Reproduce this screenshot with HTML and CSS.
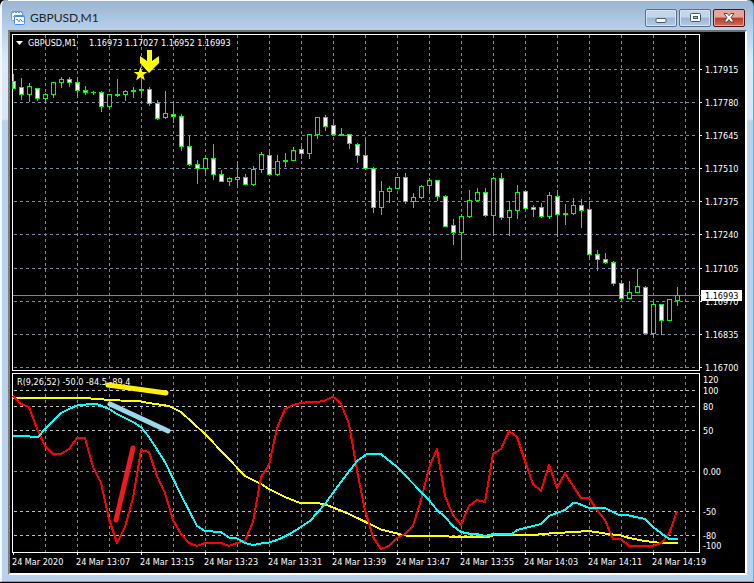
FILE: index.html
```html
<!DOCTYPE html>
<html lang="en">
<head>
<meta charset="utf-8">
<title>GBPUSD,M1</title>
<link rel="stylesheet" href="styles.css">
</head>
<body>
<main class="window">
  <header class="titlebar">
    <svg class="app-icon" viewBox="0 0 14 14" aria-hidden="true">
      <rect x="0.5" y="0.5" width="11" height="9" rx="1" fill="#eef5ff" stroke="#5c97ee"/>
      <path d="M1 1.5H11" stroke="#5c97ee" stroke-dasharray="2 1"/>
      <path d="M2 6l2-2 2 2" fill="none" stroke="#5c97ee"/>
      <rect x="3.5" y="4.5" width="10" height="9" rx="1" fill="#fff" stroke="#4d8cec"/>
      <path d="M4 5.5H13" stroke="#4d8cec"/>
      <path d="M5 9l1-1 2 3 1.500-3 2 3 1-1" fill="none" stroke="#4d8cec"/>
    </svg>
    <h1 class="title">GBPUSD,M1</h1>
    <div class="controls">
      <button class="control" type="button" aria-label="Minimize">
        <svg viewBox="0 0 12 12"><rect x="1" y="6.5" width="10" height="4" rx="1" fill="#fff" stroke="#4c5870"/></svg>
      </button>
      <button class="control" type="button" aria-label="Maximize">
        <svg viewBox="0 0 12 12"><rect x="1.5" y="1.5" width="10" height="8" rx="1" fill="#fff" stroke="#4c5870"/><rect x="4.5" y="4.5" width="4" height="2" fill="#9db8d6" stroke="#4c5870"/></svg>
      </button>
      <button class="control close" type="button" aria-label="Close">
        <svg viewBox="0 0 12 12"><path d="M1 1.500h3.200L6 3.700 7.800 1.500H11L8 5.500l3 4.500H7.800L6 7.600 4.200 10H1l3-4.500z" fill="#fff" stroke="#5b4a57" stroke-linejoin="round"/></svg>
      </button>
    </div>
  </header>
  <section class="client">
    <svg class="chart" viewBox="10 32 735 541" role="img" aria-label="GBPUSD one minute candles with R indicator">
      <g id="grid"></g>
      <path class="frame" d="M12 34.500H700M12.500 34V371M12 370.500H700M12.500 373V553M12 373.500H700M12 552.500H700M699.500 34V371M699.500 373V553"/>
      <path class="bid" d="M13 295.500H701"/>
      <g id="candles"></g>

      <g class="series">
        <polyline class="slow" points="13,398 84,398 110,400 141,401.500 149,403 169,406 181,412 205,434 245,476 261,484 269,489 285,497 300,503 320,503.500 327,505 349,514 381,529.500 405,535.500 446,536 452,537 489,537 494,535 533,535 549,533.500 565,532.500 589,531 605,533.500 621,535.500 629,538 645,541 661,543 678,543"/>
        <polyline class="fast" points="13,396 21,404 29,407 38,431 45,446 53,454 61,454 69,449 77,438 85,438 93,467 101,483 109,519 117,543 125,527 133,498 141,450 149,452 157,476 165,493 173,520 181,534 189,543 197,546 205,543 221,543 229,546 237,543 245,541 253,522 261,477 269,465 277,428 285,409 293,405 301,403 309,402 317,402 325,400.500 333,396.500 341,404 349,424 357,470 365,510 373,537 381,549 389,546 397,538 405,534 413,526 421,500 429,468 437,449 445,496 453,515 461,525 469,506 477,500 485,502 493,454 501,449 509,431 517,437 525,461 533,484 541,491 549,465 557,488 565,473 573,486 581,498 589,498 597,510 605,520 613,539 621,539 629,546 653,546 661,543 669,534 677,511"/>
        <polyline class="medium" points="13,436 29,436 31,437 38,437 45,429 61,413 69,409 77,405.500 91,404 97,404 109,409 117,414 133,422 141,427 149,437 165,462 181,495 197,526 205,531 221,532 229,537.500 237,538.500 245,543 253,545 261,543.500 269,542.500 277,540 285,536.500 293,532 310,521 325,504 341,482 357,461 366,454.500 381,454 397,467 429,500 437,510 445,517 453,526 461,532 471,534 477,534 485,536 493,534 512,534 517,530 533,526 541,524 549,516 565,510 573,503 577,503 589,508 605,508 618,514.500 629,515.500 645,519 653,527 669,539 678,539"/>
      </g>

      <g class="labels">
        <path d="M16 41h7l-3.500 4z" fill="#fff"/>
        <text x="28" y="46">GBPUSD,M1</text>
        <text x="89" y="46">1.16973 1.17027 1.16952 1.16993</text>
        <text x="17" y="385">R(9,26,52) -50.0 -84.5 -89.4</text>
      </g>

      <g class="marks">
        <path d="M108 385L166 393" stroke="#fff200"/>
        <path d="M110 404L168 431" stroke="#99d9ea"/>
        <path d="M116 520L133 448" stroke="#ed1c24"/>
      </g>
      <path class="signal" d="M147 50h5v11l7-5v7l-10 10-9-10v-7l7 5z"/>
      <path class="signal" d="M140.500 67l1.800 5h5l-4 3 1.600 5.500-4.400-3.200-4.400 3.200 1.600-5.500-4-3h5z"/>

      <g id="axis"></g>
    </svg>
  </section>
</main>
<script src="chart.js"></script>
</body>
</html>
```
FILE: styles.css
```css
* {
  box-sizing: border-box;
}

body {
  margin: 0;
  background: #000;
}

.window {
  min-height: calc(100vh - 1px);
  padding: 0 6px;
  border: 1px solid #2fc3dd;
  border-width: 0 1px 1px 2px;
  border-left-color: #f2f8fd;
  border-radius: 6px 6px 0 0;
  background: linear-gradient(#99b4d1, #b9d1ea 30px, #dce9f7 60px, #d8e6f5 119px, #b9d1ea 121px);
}

.titlebar {
  display: flex;
  align-items: center;
  height: 30px;
  padding: 5px 2px 0 3px;
  border-top: 1px solid #f2f8fd;
}

.app-icon {
  width: 14px;
  height: 14px;
}

.title {
  flex: 1;
  margin: 0 0 0 5px;
  color: #1c2430;
  font: 12px/18px Lato, "Open Sans", sans-serif;
}

.controls {
  display: flex;
  gap: 2px;
}

.control {
  display: flex;
  align-items: center;
  justify-content: center;
  width: 32px;
  height: 18px;
  padding: 0;
  border: 1px solid #5b6f8c;
  border-radius: 2px;
  background: linear-gradient(#c3d5e9 45%, #9ab5d3 50%, #b5cde6);
  box-shadow: inset 0 0 0 1px #d5e4f3;
}

.control svg {
  width: 12px;
  height: 12px;
}

.close {
  border-color: #4d1420;
  background: linear-gradient(#e5a59b 45%, #b93a26 50%, #d0705a);
  box-shadow: inset 0 0 0 1px #e6a79c;
}

.client {
  border: 2px solid #fff;
  border-top-color: #6f6f6f;
  border-left-color: #7d7d7d;
  background: #000;
}

.chart {
  display: block;
  width: 100%;
  height: auto;
}

.frame {
  stroke: #fff;
}

.bid {
  stroke: #778899;
}

.grid-line {
  stroke: #778899;
  stroke-dasharray: 3 3;
}

.level {
  stroke: #c0c0c0;
}

.wick {
  stroke: #0f0;
}

.candle {
  fill: #000;
  stroke: #0f0;
}

.bear {
  fill: #fff;
}

.series {
  fill: none;
  stroke-width: 2;
  stroke-linejoin: round;
  shape-rendering: crispEdges;
}

.slow {
  stroke: #ff0;
}

.fast {
  stroke: #f00;
}

.medium {
  stroke: #0ff;
}

.labels,
#axis {
  fill: #fff;
  font: 9px "DejaVu Sans Condensed", "DejaVu Sans", sans-serif;
}

#axis path {
  stroke: #fff;
}

#axis .current {
  fill: #000;
}

.marks {
  stroke-width: 5;
  stroke-linecap: round;
}

.signal {
  fill: #ff0;
}
```
FILE: chart.js
```js
const FIRST_X = 13;
const STEP = 8;

// One candle per entry: high, body top, body bottom, low, kind (w = bearish, b = bullish).
const candles = `74 81 89 89 w|78 87 95 100 w|83 86 95 102 b|88 88 99 101 w|93 94 99 104 b|82 82 95 98 b|77 79 83 88 b|77 79 83 87 w
78 82 91 96 w|86 90 93 95 w|91 92 93 95 b|91 92 107 112 w|94 94 107 107 b|79 94 96 97 b|90 91 95 101 b|87 90 92 98 b
80 89 91 95 b|87 89 104 106 w|100 103 119 120 w|91 113 118 119 b|104 114 117 123 w|114 116 147 151 w|135 146 165 166 w|160 164 169 184 w
158 158 169 173 b|144 158 175 180 w|170 174 182 182 w|177 178 182 186 b|161 177 180 186 b|174 177 185 185 w|166 169 185 186 b|152 154 170 173 b
152 155 175 175 w|155 161 175 176 b|153 160 162 167 b|147 150 161 161 b|146 149 154 159 w|134 134 154 159 b|117 117 135 139 b|115 117 127 131 w
121 125 135 135 w|128 134 136 136 b|134 134 144 149 w|143 144 156 163 w|139 155 169 170 w|167 168 208 213 w|181 191 208 215 b|186 188 192 203 b
177 177 189 189 b|173 177 202 204 w|193 197 202 208 b|185 186 198 199 b|178 180 186 194 b|180 180 197 201 w|195 196 227 227 w|219 225 233 245 w
214 216 233 258 b|190 200 217 218 b|188 192 201 201 b|188 192 216 217 w|177 178 216 236 b|173 178 218 220 w|201 210 218 236 b|185 192 211 219 b
190 191 209 209 w|205 207 210 217 w|203 207 217 218 w|192 195 217 219 b|190 196 215 237 w|204 213 215 225 b|198 205 214 215 b|199 205 211 228 w
201 209 255 258 w|250 254 260 271 w|253 259 263 264 w|261 262 284 286 w|280 283 299 301 w|281 292 299 299 b|269 286 293 293 b|286 287 334 334 w
302 304 334 338 b|304 304 321 335 w|299 299 321 321 b|287 295 301 306 b`
  .split(/[|\n]/)
  .map(row => row.split(" "));

const prices = [
  ["1.17915", 69], ["1.17780", 102], ["1.17645", 135], ["1.17510", 168], ["1.17375", 201],
  ["1.17240", 234], ["1.17105", 268], ["1.16970", 301], ["1.16835", 334], ["1.16700", 367]
];

const levels = [
  ["120", 379], ["100", 390], ["80", 406], ["50", 430], ["0.00", 471],
  ["-50", 511], ["-80", 535], ["-100", 545]
];

const times = ["24 Mar 2020", "24 Mar 13:07", "24 Mar 13:15", "24 Mar 13:23", "24 Mar 13:31",
  "24 Mar 13:39", "24 Mar 13:47", "24 Mar 13:55", "24 Mar 14:03", "24 Mar 14:11", "24 Mar 14:19"];

let grid = "";
for (let x = 45; x < 699; x += 32) {
  grid += `<path class="grid-line" d="M${x}.5 35V370M${x}.5 376V552"/>`;
}
for (const [, y] of prices) {
  grid += `<path class="grid-line" d="M14 ${y}.5H697"/>`;
}
for (const [label, y] of levels) {
  if (y < 390 || y > 540) continue;
  const kind = label === "0.00" ? "" : " level";
  grid += `<path class="grid-line${kind}" d="M14 ${y}.5H697"/>`;
}
document.getElementById("grid").innerHTML = grid;

document.getElementById("candles").innerHTML = candles.map(([high, top, bottom, low, kind], i) => {
  const x = FIRST_X + i * STEP;
  const left = Math.max(x - 2, FIRST_X - 1);
  const width = x + 2 - left;
  const height = bottom - top - 1;
  return `<path class="wick" d="M${x}.5 ${high}V${low}"/>` +
    `<rect class="candle${kind === "w" ? " bear" : ""}" x="${left}.5" y="${top}.5" width="${width}" height="${height || 0.01}"/>`;
}).join("");

let axis = "";
for (const [label, y] of prices) {
  axis += `<path d="M700 ${y}.5H702"/><text x="705" y="${y + 4}">${label}</text>`;
}
axis += `<rect x="701" y="290" width="41" height="11"/><text class="current" x="705" y="299">1.16993</text>`;
for (const [label, y] of levels) {
  axis += `<text x="703" y="${y + 4}">${label}</text>`;
}
times.forEach((label, i) => {
  const x = FIRST_X + i * 64;
  axis += `<path d="M${x}.5 553V555"/><text x="${x - 1}" y="565">${label}</text>`;
});
document.getElementById("axis").innerHTML = axis;
```
